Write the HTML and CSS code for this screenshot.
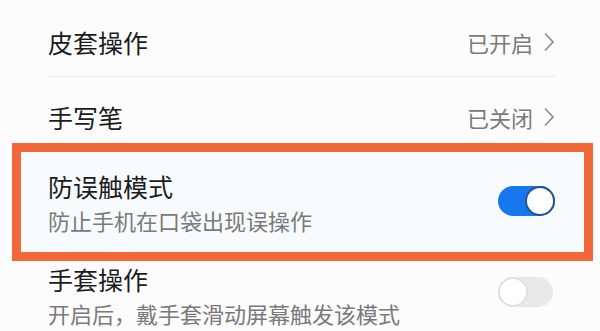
FILE: index.html
```html
<!DOCTYPE html>
<html lang="zh">
<head>
<meta charset="utf-8">
<link rel="stylesheet" href="styles.css">
</head>
<body>
<div class="page">
  <div class="row row-first">
    <span class="title">皮套操作</span>
    <span class="status">已开启<svg class="chev" viewBox="0 0 12 20" width="12" height="20"><polyline points="2,1.5 10,10 2,18.5"/></svg></span>
  </div>
  <div class="sep"></div>
  <div class="row row-second">
    <span class="title">手写笔</span>
    <span class="status">已关闭<svg class="chev" viewBox="0 0 12 20" width="12" height="20"><polyline points="2,1.5 10,10 2,18.5"/></svg></span>
  </div>
  <div class="row boxed">
    <div class="text">
      <div class="title">防误触模式</div>
      <div class="sub">防止手机在口袋出现误操作</div>
    </div>
    <div class="toggle on"><span class="knob"></span></div>
  </div>
  <div class="row row-last">
    <div class="text">
      <div class="title">手套操作</div>
      <div class="sub">开启后，戴手套滑动屏幕触发该模式</div>
    </div>
    <div class="toggle off"><span class="knob"></span></div>
  </div>
</div>
</body>
</html>
```
FILE: styles.css
```css
html, body {
  margin: 0;
  padding: 0;
  background: #fcfcfc;
}
body {
  width: 600px;
  height: 331px;
  overflow: hidden;
  font-family: "Noto Sans CJK SC", "Noto Sans", sans-serif;
}
.page {
  display: flex;
  flex-direction: column;
}
.row {
  display: flex;
  align-items: center;
  justify-content: space-between;
  padding: 0 45px 0 48px;
}
.title {
  font-size: 25px;
  line-height: 30px;
  color: #1c1c1c;
}
.sub {
  font-size: 22px;
  line-height: 28px;
  color: #7a7a7a;
  margin-top: 5px;
}
.status {
  display: flex;
  align-items: center;
  font-size: 22px;
  line-height: 30px;
  color: #7a7a7a;
}
.chev {
  margin-left: 10px;
  fill: none;
  stroke: #8a8a8a;
  stroke-width: 1.6;
}
.row-first {
  padding-top: 27px;
  padding-bottom: 19px;
}
.sep {
  height: 1px;
  margin: 0 45px 0 48px;
  background: #ececec;
}
.row-second {
  padding-top: 25px;
  padding-bottom: 11px;
}
.boxed {
  margin: 0 7px 0 12px;
  border: 9px solid #f2683a;
  background: #f8fbfd;
  padding: 19px 29px 18px 27px;
}
.row-last {
  padding-top: 3px;
  padding-right: 47px;
}
.toggle {
  position: relative;
  width: 57px;
  height: 30px;
  border-radius: 15px;
  box-sizing: border-box;
}
.toggle.on {
  background: #1777ef;
  margin-top: -4px;
}
.toggle.off {
  width: 55px;
  background: #e9e9e9;
  margin-top: -8px;
}
.knob {
  position: absolute;
  top: 0;
  width: 30px;
  height: 30px;
  border-radius: 50%;
  background: #ffffff;
  box-sizing: border-box;
}
.on .knob {
  right: 0;
  border: 2px solid #24558e;
}
.off .knob {
  left: 0;
  border: 2px solid #e0e0e0;
}
```
